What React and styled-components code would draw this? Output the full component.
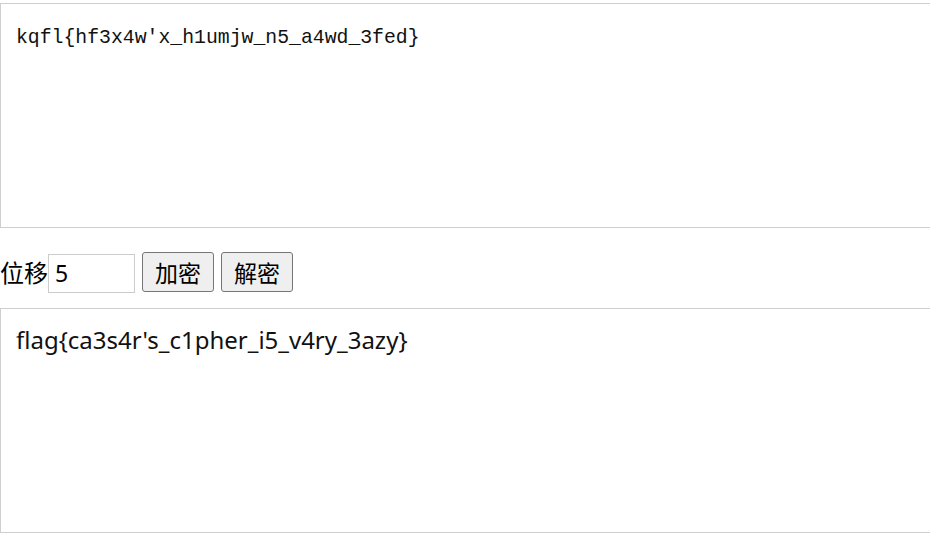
import React, { useState } from 'react';
import styled, { createGlobalStyle } from 'styled-components';

const GlobalStyle = createGlobalStyle`
  html, body {
    margin: 0;
    padding: 0;
    background: #fff;
    overflow: hidden;
  }
`;

const Page = styled.div`
  display: flex;
  flex-direction: column;
  padding-top: 3px;
  width: 930px;
  overflow: hidden;
`;

const TextBox = styled.textarea`
  box-sizing: border-box;
  width: 960px;
  height: 225px;
  margin: 0;
  padding: ${({ $mono }) => ($mono ? '22px 15px 15px' : '15px')};
  border: 1px solid #cfcfcf;
  resize: none;
  outline: none;
  color: #111;
  font-family: ${({ $mono }) =>
    $mono ? '"Liberation Mono", "Noto Sans CJK SC", monospace' : '"Noto Sans", "Noto Sans CJK SC", sans-serif'};
  font-size: ${({ $mono }) => ($mono ? '19.8px' : '24px')};
  line-height: 1.3;
`;

const Controls = styled.div`
  display: flex;
  align-items: center;
  height: 40px;
  margin: 24px 0 16px;
  font-family: "Noto Sans CJK SC", sans-serif;
  font-size: 24px;
  color: #000;
`;

const Label = styled.label`
  display: flex;
  align-items: center;
  line-height: 1;
`;

const ShiftInput = styled.input`
  box-sizing: border-box;
  width: 87px;
  height: 39px;
  margin: 2px 0 0;
  padding: 0 6px;
  border: 1px solid #ccc;
  outline: none;
  font-family: "Noto Sans", sans-serif;
  font-size: 23px;
  color: #000;
`;

const Button = styled.button`
  box-sizing: border-box;
  height: 40px;
  width: 72px;
  margin-left: 7px;
  padding: 0;
  border: 1px solid #767676;
  border-radius: 3px;
  background: #efefef;
  font-family: "Noto Sans CJK SC", sans-serif;
  font-size: 23px;
  color: #000;
  cursor: pointer;
`;

const App = () => {
  const [shift, setShift] = useState('5');
  const [cipher, setCipher] = useState("kqfl{hf3x4w'x_h1umjw_n5_a4wd_3fed}");
  const [plain, setPlain] = useState("flag{ca3s4r's_c1pher_i5_v4ry_3azy}");

  const rotate = (text, n) =>
    text.replace(/[a-z]/gi, (c) => {
      const base = c <= 'Z' ? 65 : 97;
      return String.fromCharCode(((c.charCodeAt(0) - base + (n % 26) + 26) % 26) + base);
    });

  return (
    <>
      <GlobalStyle />
      <Page>
        <TextBox $mono value={cipher} onChange={(e) => setCipher(e.target.value)} />
        <Controls>
          <Label>
            位移
            <ShiftInput value={shift} onChange={(e) => setShift(e.target.value)} />
          </Label>
          <Button onClick={() => setCipher(rotate(plain, Number(shift) || 0))}>加密</Button>
          <Button onClick={() => setPlain(rotate(cipher, -(Number(shift) || 0)))}>解密</Button>
        </Controls>
        <TextBox value={plain} onChange={(e) => setPlain(e.target.value)} />
      </Page>
    </>
  );
};

export default App;
